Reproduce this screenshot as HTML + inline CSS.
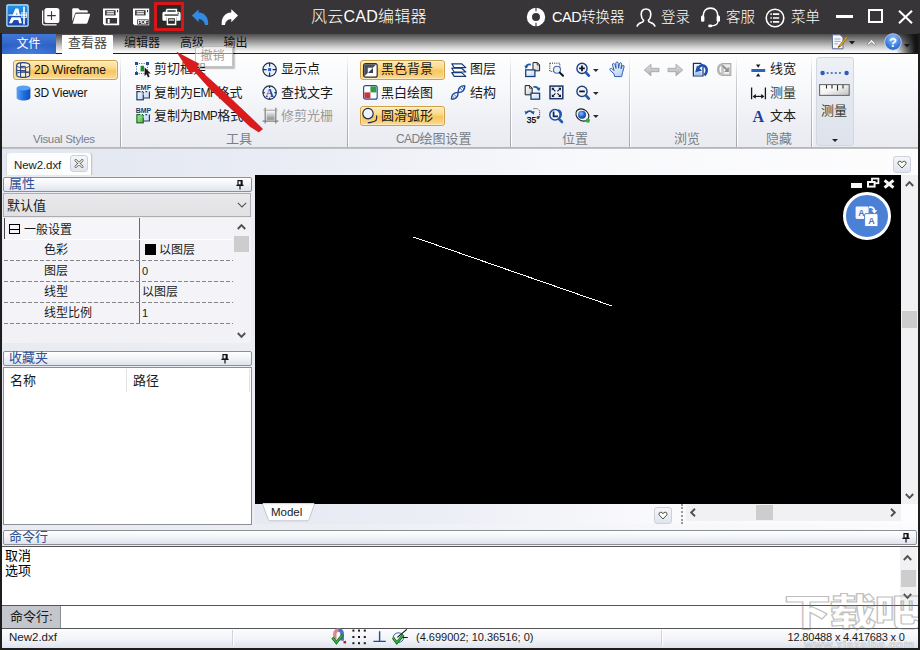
<!DOCTYPE html>
<html lang="zh-CN">
<head>
<meta charset="utf-8">
<title>风云CAD编辑器</title>
<style>
html,body{margin:0;padding:0;background:#373537;}
body{width:920px;height:650px;overflow:hidden;font-family:"Liberation Sans","Noto Sans CJK SC",sans-serif;font-size:13px;color:#1a1a1a;}
#app{position:relative;width:920px;height:650px;overflow:hidden;background:linear-gradient(to right,#e9ebf2 0%,#eceef4 35%,#f6f7fa 70%,#fbfbfd 100%);}
.a{position:absolute;}
.t{position:absolute;white-space:nowrap;line-height:16px;height:16px;}
svg{position:absolute;overflow:visible;}
/* title bar */
#titlebar{left:0;top:0;width:920px;height:34px;background:#373537;}
#titlebar .t{color:#fff;font-weight:300;}
/* tab row */
#tabrow{left:0;top:34px;width:920px;height:19px;background:linear-gradient(to bottom,#4e4c4e 0%,#8a898a 32%,#c4c3c4 62%,#f0f0f0 88%,#ffffff 100%);}
#tabline{left:0;top:53px;width:920px;height:1px;background:#1c1c1c;}
#filetab{left:2px;top:34px;width:54px;height:20px;background:radial-gradient(ellipse 60% 70% at 50% 105%,rgba(90,150,235,0.55),rgba(90,150,235,0) 100%),linear-gradient(to bottom,#4177d6 0%,#3468cc 45%,#2b5fc4 55%,#3167cc 100%);}
#viewtab{left:62px;top:34.5px;width:51px;height:20.5px;background:linear-gradient(to bottom,#ffffff,#fbfcfd);border-radius:1px 1px 0 0;}
/* ribbon */
#ribbon{left:2px;top:54px;width:916px;height:93px;background:linear-gradient(to bottom,#fefefe 0%,#f8f9fb 35%,#eff0f5 70%,#e9ebf1 100%);}
#ribbonline{left:2px;top:147px;width:916px;height:2px;background:linear-gradient(to bottom,#b0b2b6,#c4c6cb);}
.gsep{position:absolute;top:56px;width:1px;height:91px;background:linear-gradient(to bottom,rgba(190,192,198,0),#cfd0d5 25%,#b8b9be 70%,#a6a7ac 100%);}
.gsep2{position:absolute;top:56px;width:1px;height:91px;background:linear-gradient(to bottom,rgba(255,255,255,0),#ffffff 30%,#ffffff 100%);}
.glabel{color:#787f89;}
.hot{position:absolute;border:1px solid #cfa146;border-radius:3px;background:linear-gradient(to bottom,#fdebbe 0%,#fbdb8c 38%,#f8c65c 55%,#fad07a 80%,#fcdd9c 100%);box-shadow:inset 0 0 0 1px rgba(255,244,210,0.55);box-sizing:border-box;}
.dis{color:#9a9a9a;}
.lat{font-size:12px;letter-spacing:-0.6px;}
/* borders */
.frame{position:absolute;background:#1e1d1e;}
.phead{position:absolute;box-sizing:border-box;border:1px solid #8c8f96;border-radius:2px;background:linear-gradient(to bottom,#ffffff 0%,#f1f3f8 50%,#dfe3ec 100%);}
.phead .t{color:#2f4f94;}
.pin{position:absolute;}
.prow{position:absolute;left:4px;width:229px;height:1px;background:repeating-linear-gradient(to right,#858585 0,#858585 4px,rgba(0,0,0,0) 4px,rgba(0,0,0,0) 6px);}
.sbar{position:absolute;background:#f1f1f3;}
.sthumb{position:absolute;background:#cdcdcd;}
</style>
</head>
<body>
<div id="app">

<!-- ================= TITLE BAR ================= -->
<div id="titlebar" class="a">

  <!-- logo -->
  <svg style="left:5.5px;top:4.3px;" width="23" height="23" viewBox="0 0 23 23">
    <defs><linearGradient id="lg1" x1="0" y1="0" x2="0" y2="1"><stop offset="0" stop-color="#2296ea"/><stop offset="0.45" stop-color="#1f74d6"/><stop offset="0.55" stop-color="#1c58c0"/><stop offset="1" stop-color="#1c3fa6"/></linearGradient></defs>
    <rect x="0.2" y="0.2" width="22.6" height="22.6" rx="1.6" fill="#1a5fb8" opacity="0.55"/>
    <rect x="0.9" y="0.9" width="21.2" height="21.2" rx="1.2" fill="url(#lg1)" stroke="#bff0ff" stroke-width="1.2"/>
    <path d="M9.4 4.6 H12.4 L15.8 19.2 H13.1 L12.3 15.9 H7.9 L6 19.2 H2.9 Z M9.9 11 H11.7 L10.9 8.6 Z" fill="#fff"/>
    <rect x="2.4" y="11.6" width="14" height="1.7" fill="#1b54bc"/>
    <path d="M2.4 11.1 H21" stroke="#fff" stroke-width="1.2" fill="none"/>
    <path d="M18 2.8 V20.4" stroke="#fff" stroke-width="1.6" fill="none"/>
    <rect x="15.8" y="8.8" width="4.6" height="4.6" fill="none" stroke="#e6f7ff" stroke-width="0.9"/>
  </svg>
  <!-- new -->
  <svg style="left:41px;top:7px;" width="20" height="20" viewBox="0 0 20 20">
    <path d="M1.6 3.4 V16 Q1.6 17.8 3.4 17.8 H15.6" fill="none" stroke="#fff" stroke-width="1.2"/>
    <rect x="3.4" y="1" width="15" height="15" rx="2.6" fill="#fff"/>
    <path d="M10.5 4.2 V13 M6.2 8.6 H14.8" stroke="#373537" stroke-width="1.1" fill="none"/>
  </svg>
  <!-- open folder -->
  <svg style="left:71px;top:7px;" width="20" height="18" viewBox="0 0 20 18">
    <path d="M1.2 14.5 V2.6 Q1.2 1.2 2.6 1.2 H7.2 L9 3.2 H15.6 Q16.8 3.2 16.8 4.4 V5.6 H5.6 Q4.4 5.6 4 6.8 Z" fill="#fff"/>
    <path d="M5.4 6.8 H18.2 Q19.4 6.8 19 8 L16.6 15.6 Q16.2 16.8 15 16.8 H2 Q1.6 16.8 1.8 16.2 L4.4 7.6 Q4.7 6.8 5.4 6.8 Z" fill="#fff"/>
  </svg>
  <!-- save -->
  <svg style="left:103px;top:8px;" width="17" height="18" viewBox="103 8 17 18">
    <path d="M103 8.5 H119.2 V25.2 H104.4 L103 23.8 Z" fill="#fff"/>
    <rect x="105.1" y="10.2" width="10.5" height="5.2" fill="#373537"/>
    <rect x="106.6" y="11.2" width="7.4" height="1.2" fill="#fff"/>
    <rect x="106.6" y="13.2" width="7.4" height="1.2" fill="#fff"/>
    <rect x="117" y="10" width="1.1" height="2.2" fill="#373537"/>
    <rect x="105.8" y="18" width="11.2" height="5.5" fill="#373537"/>
    <rect x="107.7" y="19" width="2" height="4" fill="#fff"/>
  </svg>
  <!-- save pdf -->
  <svg style="left:133px;top:8px;will-change:transform;" width="17" height="18" viewBox="133 8 17 18">
    <path d="M133 8.5 H149.2 V25.2 H134.4 L133 23.8 Z" fill="#fff"/>
    <rect x="135.1" y="10.2" width="10.5" height="5.2" fill="#373537"/>
    <rect x="136.6" y="11.2" width="7.4" height="1.2" fill="#fff"/>
    <rect x="136.6" y="13.2" width="7.4" height="1.2" fill="#fff"/>
    <rect x="147" y="10" width="1.1" height="2.2" fill="#373537"/>
    <rect x="137.2" y="19.4" width="11.4" height="5.2" fill="#373537"/>
    <text x="142.9" y="24.1" font-size="5.8" font-weight="bold" fill="#fff" text-anchor="middle" font-family="Liberation Sans, sans-serif" textLength="10.4" lengthAdjust="spacing">PDF</text>
  </svg>
  <!-- red highlight box -->
  <div class="a" style="left:154px;top:2px;width:30px;height:29px;box-sizing:border-box;border:3px solid #d8161a;background:#2a2829;"></div>
  <!-- printer -->
  <svg style="left:162px;top:8px;" width="19" height="18" viewBox="0 0 19 18">
    <path d="M4.6 1.4 H14.4 V4" fill="none" stroke="#fff" stroke-width="1.5"/>
    <path d="M4.6 4 V1.4" fill="none" stroke="#fff" stroke-width="1.5"/>
    <path d="M2 3.8 H17 Q18.6 3.8 18.6 5.4 V11.6 Q18.6 12.8 17.4 12.8 H14.4 V9.2 H4.6 V12.8 H1.6 Q0.4 12.8 0.4 11.6 V5.4 Q0.4 3.8 2 3.8 Z" fill="#fff"/>
    <rect x="2.6" y="6.4" width="13.8" height="1.3" fill="#2a2829"/>
    <circle cx="16.2" cy="5.2" r="0.7" fill="#2a2829"/>
    <path d="M5.4 9.6 H13.6 V16.6 H5.4 Z" fill="none" stroke="#fff" stroke-width="1.5"/>
    <path d="M7 12 H12" stroke="#fff" stroke-width="1.2"/>
  </svg>
  <!-- undo -->
  <svg style="left:191px;top:8px;" width="18" height="18" viewBox="191 8 18 18">
    <path d="M198.6 9.2 V12.6 C205.4 12.8 208.6 18 208.2 25 L205 25 C204.4 21.2 202.4 19.2 198.6 19 V22.2 L191.9 15.5 Z" fill="#2f8be6"/>
  </svg>
  <!-- redo -->
  <svg style="left:221px;top:8px;" width="18" height="18" viewBox="221 8 18 18">
    <path d="M231.3 9.2 V12.6 C224.5 12.8 221.3 18 221.7 25 L224.9 25 C225.5 21.2 227.5 19.2 231.3 19 V22.2 L238.0 15.5 Z" fill="#fff"/>
  </svg>
  <!-- CAD converter ring -->
  <svg style="left:526px;top:7px;" width="20" height="20" viewBox="0 0 20 20">
    <circle cx="10" cy="10" r="6.6" fill="none" stroke="#fff" stroke-width="5.2"/>
    <path d="M10 0 V4.2" stroke="#373537" stroke-width="1.1"/>
    <path d="M10 15.8 V20" stroke="#373537" stroke-width="1.1"/>
  </svg>
  <!-- user -->
  <svg style="left:636px;top:8px;" width="20" height="20" viewBox="0 0 20 20">
    <path d="M10 1 C13.4 1 14.8 3.6 14.8 6.6 C14.8 9.4 13.6 11.4 12.4 12.4 C12.4 13.6 13 14 14.6 14.6 C17 15.4 18.6 16.4 19 18.6" fill="none" stroke="#fff" stroke-width="1.6"/>
    <path d="M10 1 C6.6 1 5.2 3.6 5.2 6.6 C5.2 9.4 6.4 11.4 7.6 12.4 C7.6 13.6 7 14 5.4 14.6 C3 15.4 1.4 16.4 1 18.6" fill="none" stroke="#fff" stroke-width="1.6"/>
  </svg>
  <!-- headset -->
  <svg style="left:700px;top:7px;" width="21" height="21" viewBox="0 0 21 21">
    <path d="M3.2 11 V9 C3.2 4.4 6 1.2 10.5 1.2 C15 1.2 17.8 4.4 17.8 9 V11" fill="none" stroke="#fff" stroke-width="1.7"/>
    <rect x="1" y="8.6" width="3.4" height="6.2" rx="1.5" fill="#fff"/>
    <rect x="16.6" y="8.6" width="3.4" height="6.2" rx="1.5" fill="#fff"/>
    <path d="M18 14 C18 17 15.4 18.6 11.6 18.8" fill="none" stroke="#fff" stroke-width="1.3"/>
    <rect x="8.2" y="17.4" width="4" height="2.8" rx="1.3" fill="#fff"/>
  </svg>
  <!-- menu -->
  <svg style="left:765px;top:8px;" width="20" height="20" viewBox="0 0 20 20">
    <circle cx="10" cy="10" r="8.8" fill="none" stroke="#fff" stroke-width="1.6"/>
    <path d="M8 6.2 H14.2 M8 10 H14.2 M8 13.8 H14.2" stroke="#fff" stroke-width="1.7"/>
    <path d="M5.4 6.2 H6.8 M5.4 10 H6.8 M5.4 13.8 H6.8" stroke="#fff" stroke-width="1.7"/>
  </svg>
  <!-- window controls -->
  <div class="a" style="left:836px;top:15px;width:17px;height:3px;background:#fff;"></div>
  <div class="a" style="left:868px;top:9px;width:15px;height:14px;box-sizing:border-box;border:2px solid #fff;"></div>
  <svg style="left:898px;top:10px;" width="15" height="14" viewBox="0 0 15 14">
    <path d="M1 0.8 L14 13.2 M14 0.8 L1 13.2" stroke="#fff" stroke-width="2.1" fill="none"/>
  </svg>
  <div class="t" style="left:311px;top:8px;font-size:16px;letter-spacing:0.25px;line-height:18px;height:18px;">风云CAD编辑器</div>
  <div class="t" style="left:552px;top:9px;font-size:14.5px;"><span style="letter-spacing:-0.5px;">CAD</span>转换器</div>
  <div class="t" style="left:661px;top:9px;font-size:14.5px;">登录</div>
  <div class="t" style="left:726px;top:9px;font-size:14.5px;">客服</div>
  <div class="t" style="left:791px;top:9px;font-size:14.5px;">菜单</div>
</div>

<!-- ================= TAB ROW ================= -->
<div id="tabrow" class="a"></div>
<div class="a" style="left:896px;top:34px;width:22px;height:19px;background:linear-gradient(to right,rgba(20,20,20,0) 0%,rgba(20,20,20,0.55) 45%,rgba(16,16,16,0.96) 85%,#111 100%);"></div>
<div id="tabline" class="a"></div>
<div id="filetab" class="a"></div>
<div id="viewtab" class="a"></div>
<div class="t" style="left:16.5px;top:36px;font-size:12px;color:#fff;">文件</div>
<div class="t" style="left:68px;top:35px;color:#4a4a4a;">查看器</div>
<div class="t" style="left:124px;top:35px;font-size:12px;color:#111;">编辑器</div>
<div class="t" style="left:180px;top:35px;font-size:12px;color:#111;">高级</div>
<div class="t" style="left:223.5px;top:35px;font-size:12px;color:#111;">输出</div>

<!-- ================= RIBBON ================= -->
<div id="ribbon" class="a"></div>
<div id="ribbonline" class="a"></div>

<!-- group separators -->
<div class="gsep" style="left:120px;"></div><div class="gsep2" style="left:121px;"></div>
<div class="gsep" style="left:347px;"></div><div class="gsep2" style="left:348px;"></div>
<div class="gsep" style="left:510px;"></div><div class="gsep2" style="left:511px;"></div>
<div class="gsep" style="left:629px;"></div><div class="gsep2" style="left:630px;"></div>
<div class="gsep" style="left:736px;"></div><div class="gsep2" style="left:737px;"></div>
<div class="gsep" style="left:811px;"></div><div class="gsep2" style="left:812px;"></div>

<!-- ===== group 1: Visual Styles ===== -->
<div class="hot" style="left:13px;top:60px;width:105px;height:20px;"></div>
<svg style="left:16px;top:62px;" width="15" height="16" viewBox="0 0 15 16">
  <path d="M0.7 3.2 V12.8 C0.7 14.4 3.8 15.4 7.2 15.4 C10.6 15.4 13.7 14.4 13.7 12.8 V3.2 C13.7 1.6 10.6 0.6 7.2 0.6 C3.8 0.6 0.7 1.6 0.7 3.2 Z" fill="rgba(255,255,255,0.6)" stroke="#1f3f7e" stroke-width="1.1"/>
  <path d="M0.7 3.2 C0.7 4.8 3.8 5.8 7.2 5.8 C10.6 5.8 13.7 4.8 13.7 3.2" fill="none" stroke="#1f3f7e" stroke-width="1"/>
  <path d="M0.7 11.4 C2.6 9.6 11.8 9.6 13.7 11.4" fill="none" stroke="#1f3f7e" stroke-width="0.9"/>
  <path d="M4.6 1 V15 M9.6 5.6 V15.2 M4.6 4.4 H9.6 M0.8 8.6 H9.6 M4.6 10 H13.6" fill="none" stroke="#1f3f7e" stroke-width="1"/>
</svg>
<div class="t" style="left:34px;top:62px;font-size:12px;letter-spacing:-0.2px;color:#141414;">2D Wireframe</div>
<svg style="left:16px;top:85px;" width="15" height="16" viewBox="0 0 15 16">
  <defs><linearGradient id="cyl" x1="0" y1="0" x2="1" y2="0"><stop offset="0" stop-color="#5aa2f2"/><stop offset="0.5" stop-color="#1f6fe0"/><stop offset="1" stop-color="#0f4fbf"/></linearGradient></defs>
  <path d="M0.6 3 V12.8 C0.6 14.4 3.8 15.6 7.5 15.6 C11.2 15.6 14.4 14.4 14.4 12.8 V3 Z" fill="url(#cyl)"/>
  <ellipse cx="7.5" cy="3" rx="6.9" ry="2.6" fill="#5c9ff0"/>
</svg>
<div class="t" style="left:34px;top:85px;font-size:12px;letter-spacing:-0.2px;color:#141414;">3D Viewer</div>
<div class="t glabel" style="left:33px;top:131px;font-size:11.5px;letter-spacing:-0.3px;">Visual Styles</div>

<!-- ===== group 2: 工具 ===== -->
<svg style="left:134px;top:61px;" width="18" height="18" viewBox="0 0 18 18">
  <rect x="2.5" y="2.5" width="11" height="10" fill="none" stroke="#3b5f9c" stroke-width="1" stroke-dasharray="1 1.4"/>
  <rect x="1" y="1" width="3" height="3" fill="#1f4c9a"/><rect x="12" y="1" width="3" height="3" fill="#1f4c9a"/>
  <rect x="1" y="11" width="3" height="3" fill="#1f4c9a"/>
  <rect x="6.6" y="4.8" width="3.4" height="5.6" fill="#1d8a2a"/>
  <path d="M10.6 6.2 L10.6 15 L12.6 13.2 L14 16.4 L15.6 15.6 L14.2 12.6 L16.8 12.4 Z" fill="#1a1a1a"/>
</svg>
<div class="t" style="left:154px;top:61px;">剪切框架</div>
<svg style="left:134px;top:84px;" width="18" height="18" viewBox="134 84 18 18">
  <defs><linearGradient id="sqEMF" x1="0" y1="0" x2="1" y2="1"><stop offset="0" stop-color="#f4f8fd"/><stop offset="1" stop-color="#c4d4ec"/></linearGradient></defs>
  <text x="135.7" y="89.7" font-size="6.6" font-weight="bold" fill="#1c3c6c" font-family="Liberation Sans, sans-serif" textLength="15.4" lengthAdjust="spacingAndGlyphs">EMF</text>
  <rect x="143.6" y="92.4" width="5.8" height="5.6" fill="#d6e2f3"/>
  <path d="M149.4 91.6 V98 H143.9 M145.4 91.6 H147.2" fill="none" stroke="#1c3c6c" stroke-width="1.2"/>
  <rect x="136.9" y="91.6" width="6.4" height="8.2" fill="url(#sqEMF)" stroke="#1c3c6c" stroke-width="1.2"/>
  <path d="M140.4 91 H143.9 V94.4" fill="none" stroke="#fafbfd" stroke-width="1.4" stroke-dasharray="1.6 1.4"/>
</svg>

<div class="t" style="left:154px;top:85px;">复制为<span class="lat">EMF</span>格式</div>
<svg style="left:134px;top:107px;" width="18" height="18" viewBox="134 107 18 18">
  <defs><linearGradient id="sqBMP" x1="0" y1="0" x2="1" y2="1"><stop offset="0" stop-color="#b4eaa4"/><stop offset="1" stop-color="#4fb24a"/></linearGradient></defs>
  <text x="135.7" y="112.7" font-size="6.6" font-weight="bold" fill="#1c3c6c" font-family="Liberation Sans, sans-serif" textLength="15.4" lengthAdjust="spacingAndGlyphs">BMP</text>
  <rect x="143.6" y="115.4" width="5.8" height="5.6" fill="#d6e2f3"/>
  <path d="M149.4 114.6 V121 H143.9 M145.4 114.6 H147.2" fill="none" stroke="#1c3c6c" stroke-width="1.2"/>
  <rect x="136.9" y="114.6" width="6.4" height="8.2" fill="url(#sqBMP)" stroke="#1f6a24" stroke-width="1.2"/>
  <path d="M140.4 114 H143.9 V117.4" fill="none" stroke="#fafbfd" stroke-width="1.4" stroke-dasharray="1.6 1.4"/>
</svg>

<div class="t" style="left:154px;top:108px;">复制为<span class="lat">BMP</span>格式</div>

<svg style="left:262px;top:62px;" width="16" height="16" viewBox="0 0 16 16">
  <circle cx="7.6" cy="7.6" r="6.7" fill="#eaf1fb" stroke="#1d2d50" stroke-width="1.2"/>
  <path d="M7.6 1 V4.6 M7.6 10.6 V14.2 M1 7.6 H4.6 M10.6 7.6 H14.2" stroke="#1d2d50" stroke-width="1.2"/>
  <rect x="6.1" y="6.1" width="3" height="3" fill="#2a5cc0"/>
</svg>
<div class="t" style="left:281px;top:61px;">显示点</div>
<svg style="left:262px;top:85px;" width="16" height="16" viewBox="0 0 16 16">
  <circle cx="7.6" cy="7.6" r="6.7" fill="#eaf1fb" stroke="#1d2d50" stroke-width="1.2"/>
  <path d="M7.6 1 V3 M7.6 12.4 V14.2 M1 7.6 H2.8 M12.4 7.6 H14.2" stroke="#1d2d50" stroke-width="1.1"/>
  <text x="7.6" y="12" font-size="11.5" font-weight="bold" fill="#1b3f9e" text-anchor="middle" font-family="Liberation Serif, serif">A</text>
</svg>
<div class="t" style="left:281px;top:85px;">查找文字</div>
<svg style="left:262px;top:107px;" width="17" height="18" viewBox="0 0 17 18">
  <defs><linearGradient id="crp" x1="0" y1="0" x2="0" y2="1"><stop offset="0" stop-color="#e8e8e8"/><stop offset="1" stop-color="#8c8c8c"/></linearGradient></defs>
  <rect x="4.6" y="5.2" width="8" height="7.6" fill="url(#crp)"/>
  <path d="M3.2 0.8 V16.6 M13.8 0.8 V16.6 M0.6 14.2 H16.4" stroke="#7d7d7d" stroke-width="1.2" fill="none"/>
  <path d="M1.4 3.2 H15.6" stroke="#a0a0a0" stroke-width="1" fill="none"/>
</svg>
<div class="t dis" style="left:281px;top:108px;">修剪光栅</div>
<div class="t glabel" style="left:226px;top:131px;">工具</div>

<!-- ===== group 3: CAD绘图设置 ===== -->
<div class="hot" style="left:360px;top:60px;width:85px;height:20px;"></div>
<svg style="left:363px;top:63px;" width="15" height="15" viewBox="0 0 15 15">
  <rect x="0.6" y="0.6" width="13.6" height="13.6" rx="2" fill="#fff" stroke="#2a2f3a" stroke-width="1.2"/>
  <path d="M1.2 13.4 V2.4 Q1.2 1.2 2.4 1.2 H13.4 Z" fill="#4a4f5a"/>
  <path d="M4.8 10 H10 V4.8 Z" fill="#3a3f4a"/>
  <path d="M4.8 10 V4.8 H10 Z" fill="#f4f6fa"/>
</svg>
<div class="t" style="left:381px;top:61px;">黑色背景</div>
<svg style="left:363px;top:85px;" width="15" height="15" viewBox="0 0 15 15">
  <rect x="0.6" y="0.6" width="13.6" height="13.6" rx="2" fill="#fff" stroke="#2f4f8f" stroke-width="1.2"/>
  <rect x="7.4" y="1.4" width="6" height="6" fill="#2f9a4a"/>
  <rect x="1.4" y="7.4" width="6" height="6" fill="#c8383a"/>
</svg>
<div class="t" style="left:381px;top:85px;">黑白绘图</div>
<div class="hot" style="left:360px;top:106px;width:85px;height:20px;"></div>
<svg style="left:361px;top:107px;" width="18" height="18" viewBox="0 0 18 18">
  <circle cx="7" cy="6.6" r="5.2" fill="#eef3fb" stroke="#1d2d50" stroke-width="1.2"/>
  <path d="M15.6 8.4 V11.4 Q15.6 13.4 13.6 14.2 L9 15.6 L6.8 15.6" fill="none" stroke="#1d2d50" stroke-width="1.2"/>
</svg>
<div class="t" style="left:381px;top:108px;">圆滑弧形</div>
<svg style="left:450px;top:62px;" width="18" height="17" viewBox="450 62 18 17">
  <path d="M451.8 72.6 H461.6 L465.8 76.4 H454.2 Z" fill="#fff" stroke="#1b3a78" stroke-width="1.2" stroke-linejoin="round"/>
  <path d="M451.8 68.2 H461.6 L465.8 72 H454.2 Z" fill="#fff" stroke="#1b3a78" stroke-width="1.2" stroke-linejoin="round"/>
  <path d="M451.8 63.8 H461.6 L465.8 67.6 H454.2 Z" fill="#fff" stroke="#1b3a78" stroke-width="1.2" stroke-linejoin="round"/>
</svg>
<div class="t" style="left:470px;top:61px;">图层</div>
<svg style="left:450px;top:84px;" width="17" height="17" viewBox="450 84 17 17">
  <path d="M451.4 99.2 C455.9 99.2 458.2 96.9 458.1 92.4 C458.1 87.9 460.3 85.6 464.8 85.6" fill="none" stroke="#1b4596" stroke-width="1.4"/>
  <path d="M451.4 99.2 C451.3 94.7 453.6 92.5 458.1 92.4 C462.6 92.4 464.9 90.1 464.8 85.6" fill="none" stroke="#1b4596" stroke-width="1.4"/>
  <path d="M452.4 96 L454.8 98.4 M453.8 94.2 L456.6 97 M459.6 87.8 L462.4 90.6 M461.4 86.4 L463.8 88.8" stroke="#3f6cc0" stroke-width="1"/>
</svg>
<div class="t" style="left:470px;top:85px;">结构</div>
<div class="t glabel" style="left:396px;top:131px;"><span class="lat">CAD</span>绘图设置</div>

<!-- ===== group 4: 位置 ===== -->
<!-- r1c1 rotate pages left -->
<svg style="left:524px;top:61px;" width="18" height="17" viewBox="524 61 18 17">
  <defs><linearGradient id="pgG" x1="0" y1="0" x2="1" y2="1"><stop offset="0" stop-color="#ffffff"/><stop offset="1" stop-color="#c9ccd2"/></linearGradient>
  <linearGradient id="pgB" x1="0" y1="0" x2="1" y2="1"><stop offset="0" stop-color="#ffffff"/><stop offset="1" stop-color="#c4d8f2"/></linearGradient></defs>
  <path d="M533 62.6 H537.4 L539.6 64.8 V70.8 H533 Z" fill="url(#pgG)" stroke="#1c1c1c" stroke-width="1"/>
  <path d="M537.2 62.8 V65 H539.4" fill="none" stroke="#1c1c1c" stroke-width="0.8"/>
  <rect x="525.7" y="69.9" width="9.2" height="6.6" fill="url(#pgB)" stroke="#1b3f80" stroke-width="1.3"/>
  <path d="M530.8 64.6 C528 64 526.6 65.2 526 67" fill="none" stroke="#1f56a8" stroke-width="1.7"/>
  <path d="M524.4 65.4 L528.4 66.6 L525.6 69 Z" fill="#1f56a8"/>
</svg>
<!-- r1c2 zoom window -->
<svg style="left:548px;top:61px;" width="17" height="17" viewBox="548 61 17 17">
  <rect x="549.8" y="63.2" width="10" height="8.2" fill="none" stroke="#222" stroke-width="1" stroke-dasharray="1 1.2"/>
  <circle cx="557" cy="69.8" r="3.5" fill="#e8f0fb" stroke="#4a6aa8" stroke-width="1.1"/>
  <path d="M559.8 72.6 L563 75.8" stroke="#111" stroke-width="2" stroke-linecap="round"/>
</svg>
<!-- r1c3 zoom in -->
<svg style="left:575px;top:61px;" width="17" height="17" viewBox="575 61 17 17">
  <circle cx="582" cy="68.4" r="5.1" fill="#f2f6fc" stroke="#1b3f8a" stroke-width="1.4"/>
  <path d="M579.2 68.4 H584.8 M582 65.6 V71.2" stroke="#12151c" stroke-width="1.8"/>
  <path d="M586 72.6 L588.8 75.6" stroke="#1f5ab0" stroke-width="2.8" stroke-linecap="round"/>
</svg>
<svg style="left:593.2px;top:69px;" width="6" height="3" viewBox="0 0 6 3"><path d="M0 0 H5.6 L2.8 3 Z" fill="#2a2a2a"/></svg>
<!-- r1c4 hand -->
<svg style="left:608px;top:61px;" width="18" height="17" viewBox="608 61 18 17">
  <defs><linearGradient id="hnd" x1="0" y1="0" x2="0.6" y2="1"><stop offset="0" stop-color="#ffffff"/><stop offset="1" stop-color="#bcd4f6"/></linearGradient></defs>
  <path d="M614.6 76.6 L614 73.8 L610.2 70.4 Q609.2 69 610.4 68.4 Q611.6 68 612.6 69.2 L614 70.6 L612.6 65 Q612.4 63.4 613.6 63.4 Q614.6 63.4 615 64.8 L616 68.4 L615.8 63.4 Q615.8 62 617 62 Q618.2 62 618.2 63.4 L618.6 68.2 L619.4 63.8 Q619.6 62.6 620.8 62.8 Q621.8 63 621.6 64.4 L621 68.8 L622.2 66 Q622.8 65 623.6 65.4 Q624.4 65.8 624 67 L622.6 72.4 L621.6 76.6 Z" fill="url(#hnd)" stroke="#2a5cb0" stroke-width="1" stroke-linejoin="round"/>
</svg>
<!-- r2c1 rotate pages right -->
<svg style="left:524px;top:84px;" width="18" height="17" viewBox="524 84 18 17">
  <path d="M525.2 85.6 H529.8 L532.2 88 V94.8 H525.2 Z" fill="url(#pgG)" stroke="#1c1c1c" stroke-width="1"/>
  <path d="M529.6 85.8 V88.2 H532" fill="none" stroke="#1c1c1c" stroke-width="0.8"/>
  <rect x="531" y="93.2" width="8.6" height="6" fill="url(#pgB)" stroke="#1b3f80" stroke-width="1.3"/>
  <path d="M533.4 87 C536.2 86.4 537.8 87.4 538.4 89" fill="none" stroke="#1f56a8" stroke-width="1.7"/>
  <path d="M540.4 87.4 L536.4 88.8 L539.2 91.2 Z" fill="#1f56a8"/>
</svg>
<!-- r2c2 extents -->
<svg style="left:548px;top:84px;" width="17" height="17" viewBox="548 84 17 17">
  <rect x="550" y="86.1" width="12.8" height="12.6" fill="#eef3fb" stroke="#1b3470" stroke-width="1.5"/>
  <path d="M552.4 88.4 L555.4 91.4 M560.4 88.4 L557.4 91.4 M552.4 96.4 L555.4 93.4 M560.4 96.4 L557.4 93.4" stroke="#14181f" stroke-width="1.1"/>
  <path d="M551.8 87.8 H554.6 L551.8 90.6 Z M561 87.8 H558.2 L561 90.6 Z M551.8 97 H554.6 L551.8 94.2 Z M561 97 H558.2 L561 94.2 Z" fill="#14181f"/>
</svg>
<!-- r2c3 zoom out -->
<svg style="left:575px;top:84px;" width="17" height="17" viewBox="575 84 17 17">
  <circle cx="582" cy="91.4" r="5.1" fill="#f2f6fc" stroke="#1b3f8a" stroke-width="1.4"/>
  <path d="M579.2 91.4 H584.8" stroke="#12151c" stroke-width="1.8"/>
  <path d="M586 95.6 L588.8 98.6" stroke="#1f5ab0" stroke-width="2.8" stroke-linecap="round"/>
</svg>
<svg style="left:593.2px;top:92px;" width="6" height="3" viewBox="0 0 6 3"><path d="M0 0 H5.6 L2.8 3 Z" fill="#2a2a2a"/></svg>
<!-- r3c1 rotate 35 -->
<svg style="left:524px;top:107px;" width="18" height="17" viewBox="524 107 18 17">
  <path d="M533.4 108.6 H537.4 L539.6 110.8 V117.4 H537" fill="none" stroke="#3a3a3a" stroke-width="0.9" stroke-dasharray="1.2 0.8"/>
  <path d="M526.6 113 C527.6 110.4 531.6 110.4 532.6 113" fill="none" stroke="#1f56a8" stroke-width="1.7"/>
  <path d="M524.6 111 L528.4 112 L525.6 114.8 Z M534.6 111 L530.8 112 L533.6 114.8 Z" fill="#1f56a8"/>
  <text x="533.2" y="123" font-size="8.4" fill="#000" stroke="#000" stroke-width="0.25" text-anchor="middle" font-family="Liberation Sans, sans-serif">35°</text>
</svg>
<!-- r3c2 zoom previous -->
<svg style="left:548px;top:107px;" width="17" height="17" viewBox="548 107 17 17">
  <circle cx="555" cy="114.8" r="5.2" fill="#f4f8fd" stroke="#1f4a9e" stroke-width="1.5"/>
  <path d="M560 117.6 C562 114.6 561 111 558.2 110" fill="none" stroke="#1f5ab0" stroke-width="2.1"/>
  <path d="M553.6 111.6 V116.4 H558" fill="none" stroke="#13285e" stroke-width="1.8"/>
  <path d="M559 119 L562 122" stroke="#1f5ab0" stroke-width="2.6" stroke-linecap="round"/>
</svg>
<!-- r3c3 zoom sphere -->
<svg style="left:575px;top:107px;" width="17" height="17" viewBox="575 107 17 17">
  <defs><radialGradient id="sph" cx="0.4" cy="0.35" r="0.7"><stop offset="0" stop-color="#8fc0fa"/><stop offset="0.6" stop-color="#1f5fc6"/><stop offset="1" stop-color="#123c8e"/></radialGradient></defs>
  <ellipse cx="582.4" cy="115" rx="7" ry="5.6" transform="rotate(38 582.4 115)" fill="#f2f3f6" stroke="#1c1c1c" stroke-width="1.1"/>
  <circle cx="582" cy="114.8" r="4" fill="url(#sph)"/>
  <circle cx="587.8" cy="120.6" r="2.2" fill="#2fae3a"/>
</svg>
<svg style="left:593.2px;top:115px;" width="6" height="3" viewBox="0 0 6 3"><path d="M0 0 H5.6 L2.8 3 Z" fill="#2a2a2a"/></svg>
<div class="t glabel" style="left:562px;top:131px;">位置</div>

<!-- ===== group 5: 浏览 ===== -->
<svg style="left:643px;top:62px;" width="18" height="16" viewBox="643 62 18 16">
  <defs><linearGradient id="gar" x1="0" y1="0" x2="0" y2="1"><stop offset="0" stop-color="#d9d9d9"/><stop offset="0.5" stop-color="#c9c9c9"/><stop offset="1" stop-color="#a9a9a9"/></linearGradient></defs>
  <path d="M644.2 70 L651 64.2 V68.3 H659 V71.7 H651 V75.8 Z" fill="url(#gar)" stroke="#a2a2a2" stroke-width="0.8" stroke-linejoin="round"/>
</svg>
<svg style="left:666px;top:62px;" width="18" height="16" viewBox="666 62 18 16">
  <path d="M682.8 70 L676 64.2 V68.3 H668 V71.7 H676 V75.8 Z" fill="url(#gar)" stroke="#a2a2a2" stroke-width="0.8" stroke-linejoin="round"/>
</svg>
<svg style="left:691px;top:61px;" width="18" height="17" viewBox="691 61 18 17">
  <path d="M693.4 63.4 H700.6 L703 65.8 V76 H693.4 Z" fill="#eef4fd" stroke="#16306e" stroke-width="1.2"/>
  <rect x="694.6" y="72.2" width="7" height="2.8" fill="#a9c6f0"/>
  <path d="M704.4 75.4 C707.8 72 707.6 66.2 703 65.4 C701 65.1 699.6 66 698.6 67.4" fill="none" stroke="#1a4fb4" stroke-width="2.5"/>
  <path d="M695.2 72.2 L702 70.8 L697 65.6 Z" fill="#1a4fb4"/>
</svg>
<svg style="left:715px;top:61px;" width="18" height="17" viewBox="715 61 18 17">
  <path d="M722 63.6 H730.8 V75.4 H722 Z" fill="#ececec" stroke="#a8a8a8" stroke-width="1.1"/>
  <path d="M722.6 64.4 C717.2 64.6 716.6 73 721.6 74.6" fill="none" stroke="#b4b4b4" stroke-width="2.4"/>
  <rect x="723.4" y="68" width="6.2" height="6.2" fill="#f4f4f4" stroke="#bcbcbc" stroke-width="0.8"/>
  <path d="M722.6 65.6 L727.4 70.4" stroke="#8e8e8e" stroke-width="1.8"/>
  <path d="M728.8 67.2 V72 H724 Z" fill="#8e8e8e"/>
</svg>
<div class="t glabel" style="left:674px;top:131px;">浏览</div>

<!-- ===== group 6: 隐藏 ===== -->
<svg style="left:750px;top:62px;" width="17" height="17" viewBox="750 62 17 17">
  <rect x="751.4" y="69" width="13.8" height="3" fill="#2a62c4"/>
  <path d="M756 64.6 H760.4 L758.2 67.8 Z" fill="#14181f"/>
  <path d="M756 76.4 H760.4 L758.2 73.2 Z" fill="#14181f"/>
</svg>
<div class="t" style="left:770px;top:61px;">线宽</div>
<svg style="left:750px;top:86px;" width="17" height="15" viewBox="750 86 17 15">
  <path d="M751.6 87.6 V99.2 M765.4 87.6 V99.2" stroke="#14181f" stroke-width="1.3"/>
  <path d="M754 96.4 H763" stroke="#14181f" stroke-width="1.2"/>
  <path d="M752.6 96.4 L755.8 94 V98.8 Z M764.4 96.4 L761.2 94 V98.8 Z" fill="#14181f"/>
</svg>
<div class="t" style="left:770px;top:85px;color:#3c3c34;">测量</div>
<div class="t" style="left:752.5px;top:107px;font-family:'Liberation Serif',serif;font-weight:bold;font-size:16px;line-height:20px;height:20px;color:#1b3f9e;">A</div>
<div class="t" style="left:770px;top:108px;">文本</div>
<div class="t glabel" style="left:766px;top:131px;">隐藏</div>

<!-- ===== big measure button ===== -->
<div class="a" style="left:816px;top:57px;width:38px;height:89px;box-sizing:border-box;border:1px solid #d2d7e0;border-radius:3px;background:linear-gradient(to bottom,#eef1f6 0%,#e2e7ef 50%,#dde3ec 100%);"></div>
<svg style="left:820px;top:70px;" width="30" height="6" viewBox="0 0 30 6">
  <circle cx="2.6" cy="3" r="2.2" fill="#2a5cb8"/><circle cx="26.6" cy="3" r="2.2" fill="#2a5cb8"/>
  <path d="M6.6 3 H23" stroke="#2a5cb8" stroke-width="1.6" stroke-dasharray="2 2.1"/>
</svg>
<svg style="left:819px;top:84px;" width="31" height="12" viewBox="0 0 31 12">
  <defs><linearGradient id="rul" x1="0" y1="0" x2="1" y2="1"><stop offset="0" stop-color="#ffffff"/><stop offset="0.45" stop-color="#f4f4f4"/><stop offset="1" stop-color="#bdbdbd"/></linearGradient></defs>
  <rect x="0.6" y="0.6" width="29.6" height="10.8" fill="url(#rul)" stroke="#6a6a6a" stroke-width="1.1"/>
  <path d="M7.5 1 V4.6 M13 1 V4.6 M18.5 1 V6.4 M24 1 V4.6" stroke="#2a2a2a" stroke-width="1.1"/>
</svg>
<div class="t" style="left:821px;top:103px;color:#3c3c34;">测量</div>
<svg style="left:831.6px;top:138.8px;" width="6" height="3" viewBox="0 0 6 3"><path d="M0 0 H6 L3 3 Z" fill="#222"/></svg>

<!-- ===== tab row right icons ===== -->
<svg style="left:831px;top:34px;" width="17" height="16" viewBox="0 0 17 16">
  <path d="M1.4 0.8 H9 L12 3.6 V14.8 H1.4 Z" fill="#f6f8fc" stroke="#5a6a8a" stroke-width="1"/>
  <path d="M3.4 5 H9.6 M3.4 7.4 H9.6 M3.4 9.8 H7" stroke="#8aa0c8" stroke-width="0.9"/>
  <path d="M15.4 2.6 L8.6 11 L7.2 13.4 L9.8 12.2 L16.4 3.8 Z" fill="#e8b42a" stroke="#8a5a12" stroke-width="0.7"/>
  <path d="M7.2 13.4 L8 11.8 L9 12.6 Z" fill="#3a2a12"/>
</svg>
<svg style="left:848.5px;top:41px;" width="6" height="4" viewBox="0 0 6 4"><path d="M0 0 H6 L3 3.4 Z" fill="#1a1a1a"/></svg>
<svg style="left:866px;top:37.5px;" width="11" height="9" viewBox="0 0 11 9">
  <path d="M1.6 6.4 Q1.2 5.6 2 4.8 L5.5 1.4 L9 4.8 Q9.8 5.6 9.4 6.4 Q8.6 7.4 7.6 6.4 L5.5 4.4 L3.4 6.4 Q2.4 7.4 1.6 6.4 Z" fill="#f2f2f2" stroke="#707478" stroke-width="0.8"/>
</svg>
<svg style="left:884px;top:33px;" width="18" height="18" viewBox="0 0 18 18">
  <defs><radialGradient id="hlp" cx="0.5" cy="0.3" r="0.8"><stop offset="0" stop-color="#9cc6f8"/><stop offset="0.55" stop-color="#3f82e0"/><stop offset="1" stop-color="#1f56b8"/></radialGradient></defs>
  <circle cx="9" cy="9" r="8.3" fill="url(#hlp)" stroke="#cfe0f8" stroke-width="0.8"/>
  <text x="9" y="13.6" font-size="13" font-weight="bold" fill="#fff" text-anchor="middle" font-family="Liberation Sans, sans-serif">?</text>
</svg>
<svg style="left:904px;top:43.5px;" width="6" height="4" viewBox="0 0 6 4"><path d="M0 0 H6 L3 3.4 Z" fill="#1a1a1a"/></svg>



<!-- ================= DOC TABS ================= -->

<div class="a" style="left:2px;top:149px;width:916px;height:27px;background:linear-gradient(to right,#e3e7f0 0%,#e9ecf4 30%,#f7f8fb 60%,#fdfdfe 100%);"></div>

<div class="a" style="left:7px;top:153px;width:84px;height:22px;background:#fdfdfe;border-radius:3px 3px 0 0;box-shadow:1px 0 0 #c4c7cd, 2px 0 0 #dcdfe4, -1px 0 0 #d8dbe0;"></div>
<div class="t" style="left:14px;top:157px;font-size:11.5px;letter-spacing:-0.1px;color:#1a1a1a;">New2.dxf</div>
<div class="a" style="left:70px;top:155px;width:18px;height:17px;box-sizing:border-box;border:1px solid #cdd1da;border-radius:3px;background:linear-gradient(to bottom,#f5f6fa,#dfe4ee);"></div>
<svg style="left:74px;top:159px;" width="10" height="9" viewBox="0 0 10 9">
  <path d="M1.8 1.4 L8.2 7.6 M8.2 1.4 L1.8 7.6" stroke="#55554a" stroke-width="2.5" stroke-linecap="round"/>
  <path d="M1.8 1.4 L8.2 7.6 M8.2 1.4 L1.8 7.6" stroke="#fdfdf6" stroke-width="1.2" stroke-linecap="round"/>
</svg>
<!-- heart button top right -->
<div class="a" style="left:893px;top:156px;width:18px;height:17px;box-sizing:border-box;border:1px solid #cdd1da;border-radius:3px;background:linear-gradient(to bottom,#f5f6fa,#dfe4ee);"></div>
<svg style="left:897px;top:160px;" width="10" height="9" viewBox="0 0 10 9">
  <path d="M5 8 L1 3.8 Q0.6 1.2 2.8 1.2 Q4.4 1.2 5 2.8 Q5.6 1.2 7.2 1.2 Q9.4 1.2 9 3.8 Z" fill="#fffef6" stroke="#45453a" stroke-width="0.9"/>
</svg>


<!-- ================= LEFT PANELS ================= -->


<!-- 属性 header -->
<div class="phead" style="left:3px;top:177px;width:249px;height:15px;"><div class="t" style="left:5px;top:-2px;">属性</div></div>
<svg class="pin" style="left:236px;top:180px;" width="8" height="10" viewBox="0 0 8 10"><path d="M2 0.6 H6 V5 H2 Z" fill="none" stroke="#111" stroke-width="1.2"/><path d="M5.4 0.6 V5" stroke="#111" stroke-width="1.6"/><path d="M0.4 5.4 H7.6 M4 5.4 V9.6" stroke="#111" stroke-width="1.2"/></svg>
<!-- dropdown -->
<div class="a" style="left:3px;top:193px;width:248px;height:24px;box-sizing:border-box;border:1px solid #adadad;background:linear-gradient(to bottom,#e9e9eb,#e1e1e3);"></div>
<div class="t" style="left:7px;top:198px;color:#1a1a1a;">默认值</div>
<svg style="left:237px;top:202px;" width="10" height="6" viewBox="0 0 10 6"><path d="M0.8 0.8 L5 5 L9.2 0.8" fill="none" stroke="#555" stroke-width="1.1"/></svg>
<!-- property grid -->
<div class="a" style="left:3px;top:218px;width:248px;height:125px;background:#f1f1f6;"></div>
<div class="a" style="left:4px;top:218px;width:229px;height:105px;background:#f4f4f8;"></div>
<div class="a" style="left:4px;top:218px;width:135px;height:21px;background:#f6f6fa;border-left:1px solid #444;box-sizing:border-box;"></div>
<div class="a" style="left:139px;top:218px;width:1px;height:105px;background:#6a6a6a;"></div>
<div class="a" style="left:4px;top:239px;width:229px;height:1px;background:#fff;"></div>
<div class="prow" style="top:260px;"></div>
<div class="prow" style="top:281px;"></div>
<div class="prow" style="top:302px;"></div>
<div class="prow" style="top:323px;"></div>
<svg style="left:9px;top:223px;" width="12" height="12" viewBox="0 0 12 12" shape-rendering="crispEdges"><rect x="0.5" y="1.5" width="10" height="9" fill="none" stroke="#000" stroke-width="1"/><path d="M1 6 H10.5" stroke="#000" stroke-width="1"/></svg>
<div class="t" style="left:24px;top:222px;font-size:12px;">一般设置</div>
<div class="t" style="left:44px;top:242px;font-size:12px;">色彩</div>
<div class="t" style="left:44px;top:263px;font-size:12px;">图层</div>
<div class="t" style="left:44px;top:284px;font-size:12px;">线型</div>
<div class="t" style="left:44px;top:305px;font-size:12px;">线型比例</div>
<div class="a" style="left:145px;top:244px;width:11px;height:11px;background:#000;"></div>
<div class="t" style="left:159px;top:242px;font-size:12px;">以图层</div>
<div class="t" style="left:142px;top:263px;font-size:11px;">0</div>
<div class="t" style="left:142px;top:284px;font-size:12px;">以图层</div>
<div class="t" style="left:142px;top:305px;font-size:11px;">1</div>
<!-- grid scrollbar -->
<div class="sbar" style="left:233px;top:218px;width:18px;height:125px;background:#f3f3f7;"></div>
<div class="sthumb" style="left:234px;top:236px;width:15px;height:16px;"></div>
<svg style="left:237px;top:224px;" width="9" height="6" viewBox="0 0 9 6"><path d="M0.8 5 L4.5 1.2 L8.2 5" fill="none" stroke="#505050" stroke-width="1.9"/></svg>
<svg style="left:237px;top:332px;" width="9" height="6" viewBox="0 0 9 6"><path d="M0.8 1 L4.5 4.8 L8.2 1" fill="none" stroke="#505050" stroke-width="1.9"/></svg>
<!-- 收藏夹 -->
<div class="phead" style="left:3px;top:351px;width:249px;height:15px;"><div class="t" style="left:5px;top:-2px;">收藏夹</div></div>
<svg class="pin" style="left:221px;top:354px;" width="8" height="10" viewBox="0 0 8 10"><path d="M2 0.6 H6 V5 H2 Z" fill="none" stroke="#111" stroke-width="1.2"/><path d="M5.4 0.6 V5" stroke="#111" stroke-width="1.6"/><path d="M0.4 5.4 H7.6 M4 5.4 V9.6" stroke="#111" stroke-width="1.2"/></svg>
<div class="a" style="left:3px;top:367px;width:249px;height:158px;box-sizing:border-box;border:1px solid #8c8f96;background:#fff;"></div>
<div class="a" style="left:126px;top:369px;width:1px;height:23px;background:#e2e2e2;"></div>
<div class="a" style="left:249px;top:369px;width:1px;height:23px;background:#e2e2e2;"></div>
<div class="t" style="left:10px;top:373px;">名称</div>
<div class="t" style="left:133px;top:373px;">路径</div>


<!-- ================= CANVAS ================= -->

<div class="a" style="left:255px;top:175px;width:646px;height:329px;background:#000;"></div>
<svg style="left:255px;top:175px;" width="646" height="329" viewBox="0 0 646 329">
  <path d="M158.5 62 L357 131" stroke="#fff" stroke-width="1" fill="none" shape-rendering="crispEdges"/>
</svg>
<!-- mini window controls -->
<div class="a" style="left:851px;top:183px;width:11px;height:4.5px;background:#f6f6f6;"></div>
<svg style="left:866px;top:177px;" width="14" height="11" viewBox="0 0 14 11">
  <rect x="6" y="1.6" width="6.4" height="4.6" fill="none" stroke="#f6f6f6" stroke-width="1.8"/>
  <rect x="2" y="5" width="6.6" height="4.6" fill="#000" stroke="#f6f6f6" stroke-width="2"/>
</svg>
<svg style="left:883px;top:180px;" width="12" height="8" viewBox="0 0 12 8">
  <path d="M1.6 0.4 L10.4 7.6 M10.4 0.4 L1.6 7.6" stroke="#f6f6f6" stroke-width="3.1"/>
</svg>
<!-- translate button -->
<svg style="left:843px;top:192px;" width="48" height="48" viewBox="0 0 48 48">
  <circle cx="24" cy="24" r="22.5" fill="#4a80d6" stroke="#fff" stroke-width="3"/>
  <rect x="12.6" y="14.6" width="13" height="12.4" rx="1.4" fill="#f4f7fc"/>
  <text x="18.4" y="24.4" font-size="8.6" font-weight="bold" fill="#4a74c0" text-anchor="middle" font-family="Liberation Sans, sans-serif">A</text>
  <rect x="21.6" y="21.6" width="13.4" height="13" rx="1.4" fill="#fff" stroke="#4a80d6" stroke-width="1"/>
  <text x="28.4" y="32" font-size="9" font-weight="bold" fill="#4a74c0" text-anchor="middle" font-family="Liberation Sans, sans-serif">A</text>
  <path d="M26 15.4 C29.6 14.6 31.6 16.6 31.4 19" fill="none" stroke="#fff" stroke-width="1.8"/>
  <path d="M28.4 18.2 H34.4 L31.4 21.6 Z" fill="#fff"/>
</svg>
<!-- v scrollbar -->
<div class="sbar" style="left:901px;top:175px;width:17px;height:329px;"></div>
<div class="sthumb" style="left:902px;top:311px;width:15px;height:17px;"></div>
<svg style="left:905px;top:181px;" width="9" height="6" viewBox="0 0 9 6"><path d="M0.8 5 L4.5 1.2 L8.2 5" fill="none" stroke="#505050" stroke-width="1.9"/></svg>
<svg style="left:905px;top:493px;" width="9" height="6" viewBox="0 0 9 6"><path d="M0.8 1 L4.5 4.8 L8.2 1" fill="none" stroke="#505050" stroke-width="1.9"/></svg>
<!-- model tab row -->
<div class="a" style="left:255px;top:504px;width:663px;height:20px;background:linear-gradient(to right,#e6e9f2 0%,#edeff6 30%,#f9f9fc 58%,#fdfdfe 100%);"></div>
<svg style="left:261px;top:504px;" width="56" height="18" viewBox="0 0 56 18">
  <path d="M1.4 0 L7.2 15.4 Q7.8 16.8 9.2 16.8 H46 Q47.4 16.8 48 15.4 L53.6 0 Z" fill="#fdfdfe" stroke="#c2c6ce" stroke-width="1"/>
  <path d="M2 0 H53" stroke="#fdfdfe" stroke-width="1.4"/>
</svg>
<div class="t" style="left:271px;top:504px;font-size:11.5px;color:#1a1a1a;">Model</div>
<!-- heart btn -->
<div class="a" style="left:654px;top:507px;width:18px;height:17px;box-sizing:border-box;border:1px solid #cdd1da;border-radius:3px;background:linear-gradient(to bottom,#f5f6fa,#dfe4ee);"></div>
<svg style="left:658px;top:511px;" width="10" height="9" viewBox="0 0 10 9">
  <path d="M5 8 L1 3.8 Q0.6 1.2 2.8 1.2 Q4.4 1.2 5 2.8 Q5.6 1.2 7.2 1.2 Q9.4 1.2 9 3.8 Z" fill="#fffef6" stroke="#45453a" stroke-width="0.9"/>
</svg>
<div class="a" style="left:681px;top:504px;width:0;height:20px;border-left:2px dotted #9a9a9a;"></div>
<!-- h scrollbar -->
<div class="sbar" style="left:686px;top:504px;width:215px;height:17px;"></div>
<div class="sthumb" style="left:756px;top:505px;width:17px;height:15px;"></div>
<svg style="left:690px;top:508px;" width="6" height="9" viewBox="0 0 6 9"><path d="M5 0.8 L1.2 4.5 L5 8.2" fill="none" stroke="#505050" stroke-width="1.9"/></svg>
<svg style="left:890px;top:508px;" width="6" height="9" viewBox="0 0 6 9"><path d="M1 0.8 L4.8 4.5 L1 8.2" fill="none" stroke="#505050" stroke-width="1.9"/></svg>


<!-- ================= BOTTOM ================= -->

<!-- 命令行 header -->
<div class="phead" style="left:3px;top:530px;width:914px;height:15px;"><div class="t" style="left:5px;top:-2px;">命令行</div></div>
<svg class="pin" style="left:902px;top:533px;" width="8" height="10" viewBox="0 0 8 10"><path d="M2 0.6 H6 V5 H2 Z" fill="none" stroke="#111" stroke-width="1.2"/><path d="M5.4 0.6 V5" stroke="#111" stroke-width="1.6"/><path d="M0.4 5.4 H7.6 M4 5.4 V9.6" stroke="#111" stroke-width="1.2"/></svg>
<!-- output -->
<div class="a" style="left:2px;top:546px;width:916px;height:60px;background:#fff;border-top:1px solid #555;border-bottom:1px solid #555;box-sizing:border-box;"></div>
<div class="t" style="left:5px;top:548px;color:#000;">取消</div>
<div class="t" style="left:5px;top:563px;color:#000;">选项</div>
<div class="sbar" style="left:900px;top:547px;width:17px;height:58px;"></div>
<div class="sthumb" style="left:901px;top:570px;width:15px;height:17px;"></div>
<svg style="left:903px;top:554.5px;" width="9" height="6" viewBox="0 0 9 6"><path d="M0.8 5 L4.5 1.2 L8.2 5" fill="none" stroke="#505050" stroke-width="1.9"/></svg>
<svg style="left:903px;top:592.5px;" width="9" height="6" viewBox="0 0 9 6"><path d="M0.8 1 L4.5 4.8 L8.2 1" fill="none" stroke="#505050" stroke-width="1.9"/></svg>
<!-- input row -->
<div class="a" style="left:2px;top:606px;width:916px;height:22px;background:#fff;"></div>
<div class="a" style="left:2px;top:606px;width:58px;height:22px;background:#c3c6cd;"></div>
<div class="a" style="left:60px;top:606px;width:1px;height:22px;background:#8a8d94;"></div>
<div class="t" style="left:10px;top:609px;color:#1a1a1a;">命令行:</div>
<div class="a" style="left:2px;top:628px;width:916px;height:1px;background:#555;"></div>
<!-- status bar -->
<div class="a" style="left:2px;top:629px;width:916px;height:19px;background:linear-gradient(to bottom,#fcfcfe,#f0f2f7 60%,#dfe3ec);"></div>
<div class="t" style="left:9px;top:629px;font-size:11.5px;color:#1a1a1a;">New2.dxf</div>
<div class="t" style="left:416px;top:629px;font-size:11px;color:#1a1a1a;">(4.699002; 10.36516; 0)</div>
<div class="t" style="left:787.5px;top:629px;font-size:11px;letter-spacing:-0.17px;color:#1a1a1a;">12.80488 x 4.417683 x 0</div>


<!-- ================= OVERLAYS ================= -->

<!-- status icons -->
<div class="a" style="left:232px;top:630px;width:1px;height:16px;background:#cfd2d8;"></div>
<div class="a" style="left:233px;top:630px;width:1px;height:16px;background:#fff;"></div>
<div class="a" style="left:661px;top:630px;width:1px;height:16px;background:#cfd2d8;"></div>
<div class="a" style="left:662px;top:630px;width:1px;height:16px;background:#fff;"></div>
<svg style="left:331px;top:628px;" width="16" height="17" viewBox="331 628 16 17">
  <path d="M334.8 639.5 V634.2 C334.8 628.6 342.2 628.6 342.2 634.2 V640.5" fill="none" stroke="#d8888e" stroke-width="3.4"/>
  <path d="M338.5 630 C342.6 630 342.2 634.2 342.2 634.2 V640.6" fill="none" stroke="#4a72c8" stroke-width="3.4"/>
  <path d="M344.6 641 L345 643.4" stroke="#c01418" stroke-width="2.6"/>
  <path d="M332.4 637.6 L336.4 642.6 L342.8 634.6" fill="none" stroke="#0f6a1a" stroke-width="2.7" stroke-linejoin="miter"/>
  <path d="M332.6 637.8 L336.4 642.4 L342.6 634.8" fill="none" stroke="#3fc04a" stroke-width="1.1"/>
</svg>
<svg style="left:352px;top:629px;" width="15" height="16" viewBox="352 629 15 16">
  <g fill="#1a1a1a"><rect x="352.4" y="629.6" width="2" height="2"/><rect x="358" y="629.6" width="2" height="2"/><rect x="363.8" y="629.6" width="2" height="2"/>
  <rect x="352.4" y="636" width="2" height="2"/><rect x="358" y="636" width="2" height="2"/><rect x="363.8" y="636" width="2" height="2"/>
  <rect x="352.4" y="642.2" width="2" height="2"/><rect x="358" y="642.2" width="2" height="2"/><rect x="363.8" y="642.2" width="2" height="2"/></g>
</svg>
<svg style="left:372px;top:630px;" width="15" height="14" viewBox="372 630 15 14">
  <path d="M379.6 631.2 V641.4 M373.4 641.4 H385.8" fill="none" stroke="#1f4a9e" stroke-width="1.4"/>
</svg>
<svg style="left:392px;top:628px;" width="17" height="17" viewBox="392 628 17 17">
  <ellipse cx="398.4" cy="637.6" rx="5.2" ry="4.8" fill="none" stroke="#2a4a8e" stroke-width="0.9"/>
  <path d="M397.4 637.4 L406.8 629.4 M402.4 637.5 H407.8" stroke="#111" stroke-width="1.2" fill="none"/>
  <path d="M393 637.8 L396.8 642.8 L403.4 634.8" fill="none" stroke="#0f6a1a" stroke-width="2.7"/>
  <path d="M393.2 638 L396.8 642.6 L403.2 635" fill="none" stroke="#3fc04a" stroke-width="1.1"/>
</svg>

<!-- tooltip -->
<div class="a" style="left:195px;top:46px;width:38px;height:21px;box-sizing:border-box;border:1px solid rgba(150,150,150,0.55);background:rgba(255,255,255,0.5);box-shadow:1.5px 1.5px 1.5px rgba(0,0,0,0.25);border-radius:1px;"></div>
<div class="t" style="left:200.5px;top:48px;font-size:12px;color:rgba(120,120,120,0.75);">撤销</div>

<!-- red arrow -->
<svg style="left:170px;top:45px;" width="100" height="95" viewBox="170 45 100 95">
  <defs><linearGradient id="arr" x1="0" y1="1" x2="1" y2="0"><stop offset="0" stop-color="#c41a1c"/><stop offset="0.55" stop-color="#de1a1c"/><stop offset="1" stop-color="#f41212"/></linearGradient></defs>
  <path d="M177.0 52.3 L198.5 63.8 L196.8 67.4 L222.9 91.0 L251.9 118.5 L262.6 129.0 L258.8 132.0 L250.0 126.4 L210.6 89.5 L194.5 71.4 L190.4 73.0 Z" fill="url(#arr)" stroke="#b4161a" stroke-width="0.6" stroke-linejoin="round"/>
</svg>

<!-- watermark -->
<div class="t" style="left:784px;top:588px;font-size:43px;line-height:50px;height:50px;font-weight:900;letter-spacing:-1.5px;transform:scale(1.09,0.87);transform-origin:0 50%;color:rgba(255,255,255,0.0);-webkit-text-stroke:1.3px rgba(130,130,130,0.5);">下载吧</div>
<div class="t" style="left:804px;top:637px;font-size:12px;font-weight:bold;letter-spacing:0.3px;color:rgba(255,255,255,0);-webkit-text-stroke:0.7px rgba(150,150,150,0.4);">www.xiazaiba.com</div>


<!-- window frame -->
<div class="frame" style="left:0;top:33px;width:2px;height:617px;"></div>
<div class="frame" style="left:918px;top:33px;width:2px;height:617px;"></div>
<div class="frame" style="left:0;top:648px;width:920px;height:2px;"></div>
</div>
</body>
</html>
